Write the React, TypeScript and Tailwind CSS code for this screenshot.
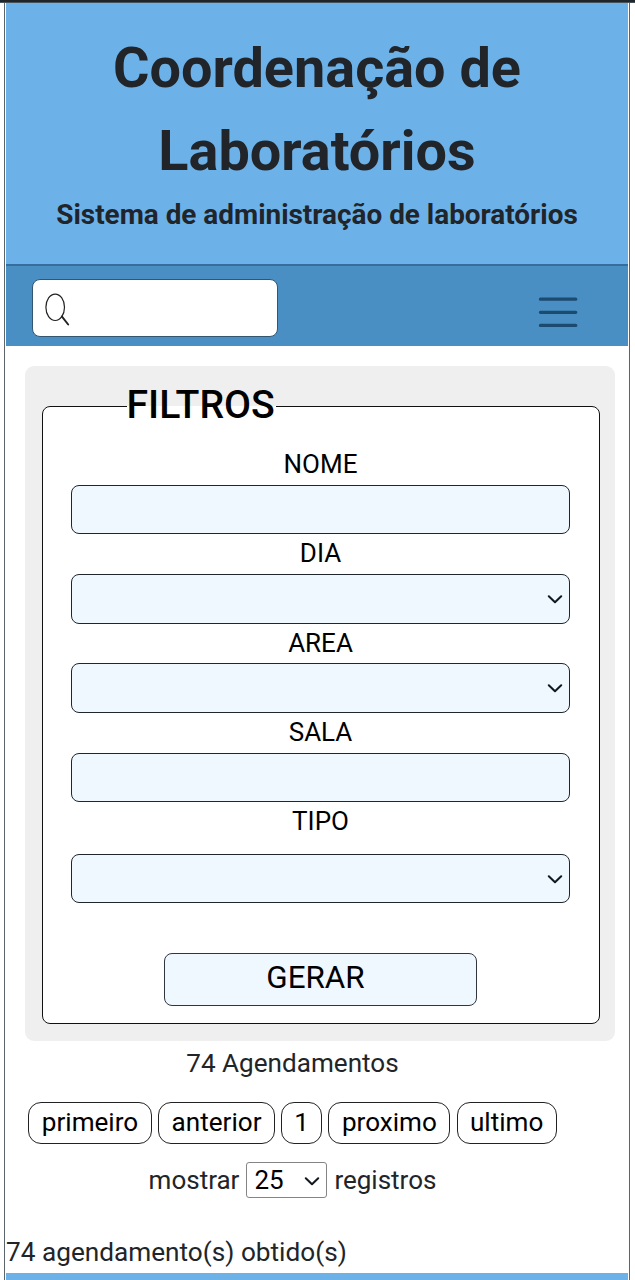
import React from "react";

function Chevron() {
  return (
    <svg className="mt-[2px] h-[9px] w-4 shrink-0" viewBox="0 0 16 9" fill="none" stroke="#111820" strokeWidth="2" strokeLinecap="round" strokeLinejoin="round">
      <path d="M1.8 1.2 8 7.2l6.2-6" />
    </svg>
  );
}

type FieldProps = { label: string; select?: boolean; size: string };

function Field({ label, select, size }: FieldProps) {
  return (
    <label className={`flex flex-col ${size}`}>
      <span className="h-[39px] text-center text-[26px] leading-[39px]">{label}</span>
      <span className="mt-auto flex h-[49.5px] items-center justify-end rounded-[8px] border border-[#20262d] bg-[#eff7ff] pr-[6px]">
        {select && <Chevron />}
      </span>
    </label>
  );
}

function PageButton({ children, width }: { children: string; width: string }) {
  return (
    <button className={`h-[42px] ${width} rounded-[13px] border border-[#222] bg-white text-center text-[26.1px] leading-[38px] text-black`}>
      <span className="-mt-[2px] block">{children}</span>
    </button>
  );
}

export default function App() {
  return (
    <div className="h-[1280px] w-[635px] overflow-hidden bg-white font-['Roboto',sans-serif] text-[#212529]">
      <div className="h-[3px] border-b border-[#44525e] bg-[#20252a]" />
      <div className="ml-1 flex h-[1277px] w-[626px] flex-col border-x border-[#5d656c] pr-px pl-px">
        <header className="h-[263px] shrink-0 border-b-2 border-[#376d9c] bg-[#6cb2e9] pt-[24px] text-center font-bold">
          <h1 className="text-[55.8px] leading-[83px]">
            Coordenação de
            <br />
            Laboratórios
          </h1>
          <h2 className="text-[27.9px] leading-[43px]">Sistema de administração de laboratórios</h2>
        </header>

        <nav className="flex h-20 shrink-0 items-start justify-between bg-[#4a8fc3] pr-[50px] pl-[26px]">
          <div className="mt-[13px] h-[58px] w-[246px] rounded-[8px] border border-[#34556f] bg-white pt-[13px] pl-3">
            <svg className="h-[34px] w-[26px]" viewBox="0 0 26 34" fill="none" stroke="#222" strokeLinecap="round">
              <ellipse cx="10.2" cy="14.3" rx="9.3" ry="13.2" strokeWidth="1.2" />
              <path d="M16.8 23.4 23.2 31.5" strokeWidth="1.9" />
            </svg>
          </div>
          <svg className="mt-[30px] h-8 w-10" viewBox="0 0 40 32" stroke="#1d4b70" strokeWidth="3.2" strokeLinecap="round">
            <path d="M2.4 3.2h35.4M2.4 16.3h35.4M2.4 29.4h35.4" />
          </svg>
        </nav>

        <main className="flex flex-1 flex-col">
          <section className="mt-5 ml-[19px] h-[675px] w-[590px] shrink-0 rounded-[9px] bg-[#efefef] pt-[10px] pl-[17px] text-black">
            <fieldset className="h-[648px] w-[558px] rounded-[8px] border border-[#111] bg-white pl-7">
              <legend className="ml-14 h-[60px] w-[149px] text-[39.2px] leading-[59px] font-medium whitespace-nowrap">
                <span className="-ml-[0.5px]">FILTROS</span>
              </legend>
              <div className="flex w-[499px] flex-col pt-[9px]">
                <Field label="NOME" size="h-[89px]" />
                <Field label="DIA" select size="h-[89.5px]" />
                <Field label="AREA" select size="h-[89px]" />
                <Field label="SALA" size="h-[89.5px]" />
                <Field label="TIPO" select size="h-[101px]" />
                <button className="mt-[50px] h-[53px] w-[313px] self-center rounded-[8px] border border-[#30363d] bg-[#eff7ff] pr-[10px] text-[31.4px] leading-[48px]">
                  <span className="-mt-[3px] block">GERAR</span>
                </button>
              </div>
            </fieldset>
          </section>

          <p className="mt-[2px] w-[573px] text-center text-[26.1px] leading-10">74 Agendamentos</p>

          <div className="mt-[19px] flex gap-[6.3px] pl-[22px]">
            <PageButton width="w-[124px]">primeiro</PageButton>
            <PageButton width="w-[116.5px]">anterior</PageButton>
            <PageButton width="w-[41px]">1</PageButton>
            <PageButton width="w-[122px]">proximo</PageButton>
            <PageButton width="w-[100px]">ultimo</PageButton>
          </div>

          <div className="mt-[18px] flex h-9 w-[573px] items-center justify-center gap-[7px] text-[26px] leading-9">
            <span>mostrar</span>
            <span className="flex h-9 w-[81px] items-center justify-between rounded-[3px] border border-[#858585] pr-[6px] pl-[7px] text-black">
              25
              <Chevron />
            </span>
            <span>registros</span>
          </div>

          <p className="mt-[34px] h-[41px] text-[26.2px] leading-10">74 agendamento(s) obtido(s)</p>
          <footer className="h-[7px] bg-[#6cb2e9]" />
        </main>
      </div>
    </div>
  );
}
